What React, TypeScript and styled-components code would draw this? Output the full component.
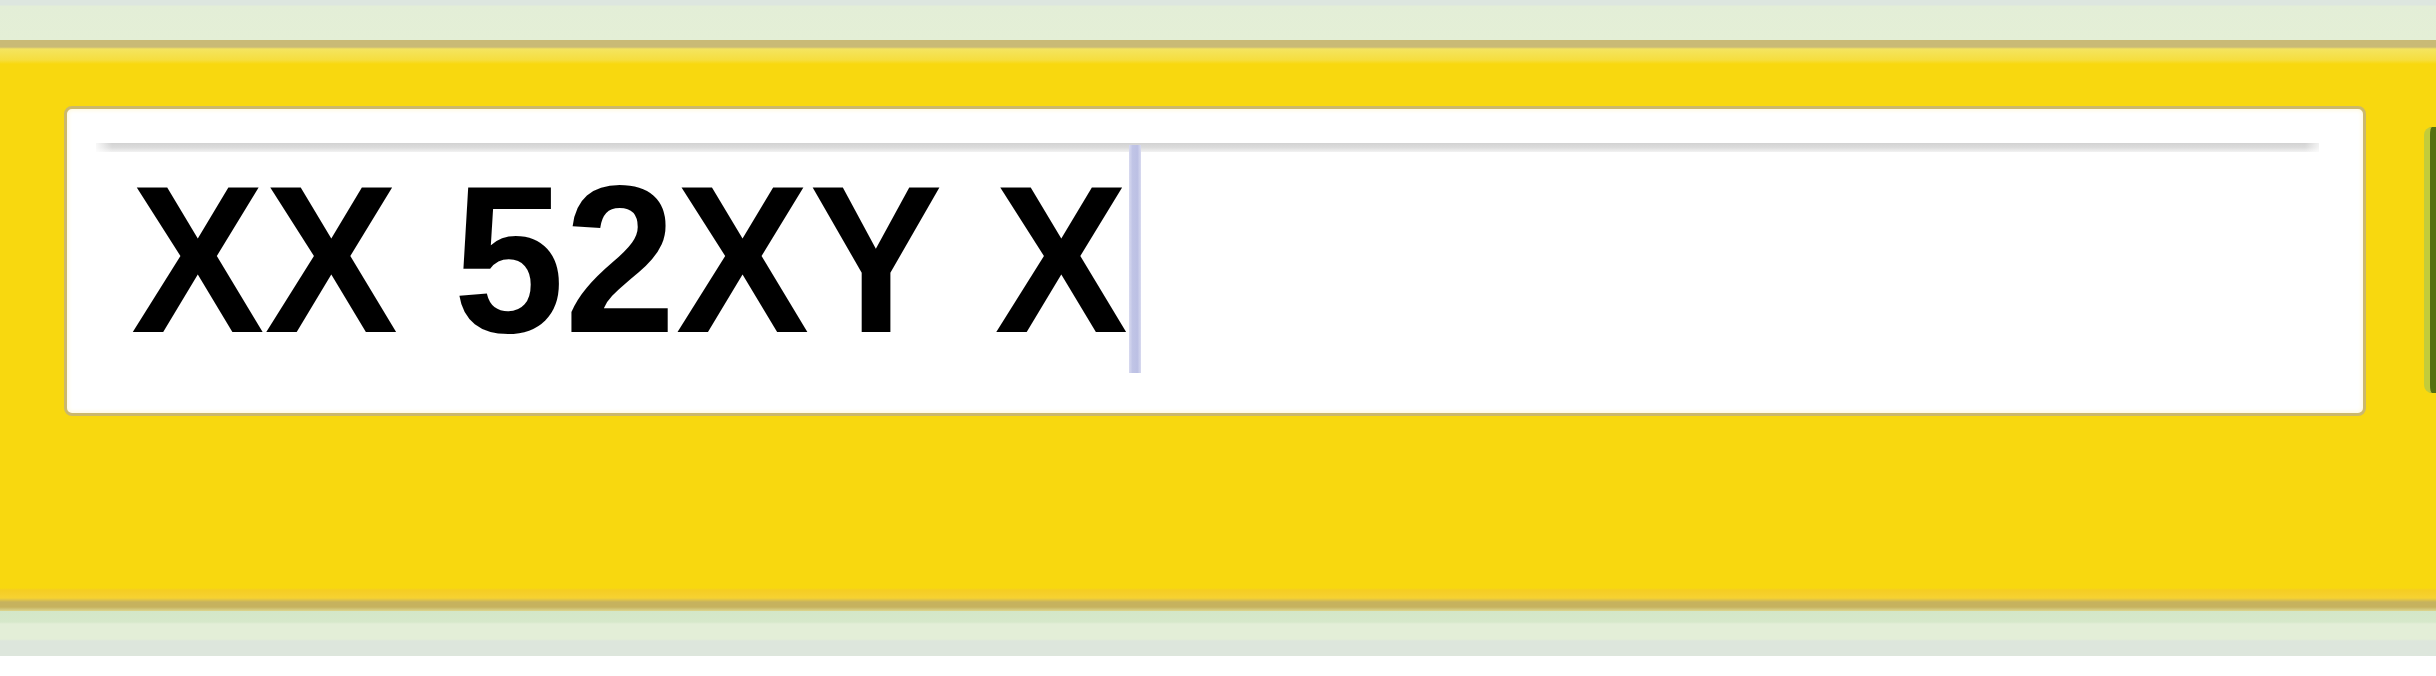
import React from 'react';
import styled, { createGlobalStyle } from 'styled-components';

const GlobalStyle = createGlobalStyle`
  html, body {
    margin: 0;
    padding: 0;
    background: #ffffff;
    overflow: hidden;
  }
  body {
    font-family: "Liberation Sans", Arial, sans-serif;
  }
`;

const Page = styled.div`
  width: 2436px;
  display: flex;
  flex-direction: column;
`;

const TopStrip = styled.div`
  height: 40px;
  background: linear-gradient(to bottom, #dde6df 0px, #dde6df 5px, #e3eed7 6px, #e4efd6 100%);
`;

const BottomStrip = styled.div`
  height: 45px;
  background: linear-gradient(
    to bottom,
    #d4e7c8 0px,
    #d6e8ca 11px,
    #e3eed7 13px,
    #e3eed7 28px,
    #dde6dc 30px,
    #dde6dc 100%
  );
`;

const Panel = styled.div`
  height: 571px;
  box-sizing: border-box;
  padding: 66px 0 0 64px;
  display: flex;
  align-items: flex-start;
  gap: 58px;
  overflow: hidden;
  background: linear-gradient(
    to bottom,
    #c9ba76 0px,
    #c9ba76 7px,
    #f4e460 9px,
    #f6de3e 20px,
    #f8d80f 24px,
    #f8d80f calc(100% - 23px),
    #f5cd22 calc(100% - 21px),
    #f6d232 calc(100% - 13px),
    #c6b25e calc(100% - 9px),
    #c6b25e calc(100% - 4px),
    #ddd68e 100%
  );
`;

const Field = styled.div`
  flex-shrink: 0;
  width: 2302px;
  height: 310px;
  box-sizing: border-box;
  border: 3px solid #cbb86c;
  border-radius: 8px;
  background: #ffffff;
  box-shadow: inset 0 0 4px 1px #fff8d8;
  padding: 34px 44px 0 29px;
  display: flex;
  flex-direction: column;
`;

const InsetLine = styled.div`
  height: 9px;
  background:
    linear-gradient(to right, rgba(255, 255, 255, 0.85) 0px, rgba(255, 255, 255, 0) 16px),
    linear-gradient(to left, rgba(255, 255, 255, 0.7) 0px, rgba(255, 255, 255, 0) 14px),
    linear-gradient(to bottom, #d2d2d2 0%, #dcdcdc 50%, #f2f2f2 100%);
`;

const TextRow = styled.div`
  margin-top: 11px;
  padding-left: 35px;
  display: flex;
  align-items: flex-start;
`;

const PlateText = styled.span`
  display: inline-block;
  font-family: "Liberation Sans", Arial, sans-serif;
  font-weight: 700;
  font-size: 200px;
  line-height: 200px;
  color: #000000;
  white-space: pre;
  transform: scaleY(1.046);
  transform-origin: center 169px;
`;

const Caret = styled.span`
  width: 12px;
  height: 228px;
  margin: -18px 0 0 1px;
  background: linear-gradient(to right, #d8daf0 0%, #c0c4e6 30%, #bcc0e4 70%, #d8daf0 100%);
`;

const SideButton = styled.div`
  flex-shrink: 0;
  margin-top: 21px;
  width: 200px;
  height: 266px;
  box-sizing: border-box;
  border-left: 6px solid #c3cc3a;
  border-radius: 8px;
  background: #56700f;
`;

const App: React.FC = () => {
  return (
    <>
      <GlobalStyle />
      <Page>
        <TopStrip />
        <Panel>
          <Field>
            <InsetLine />
            <TextRow>
              <PlateText>XX 52XY X</PlateText>
              <Caret />
            </TextRow>
          </Field>
          <SideButton />
        </Panel>
        <BottomStrip />
      </Page>
    </>
  );
};

export default App;
